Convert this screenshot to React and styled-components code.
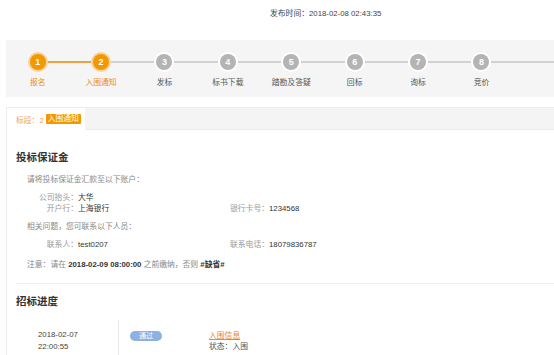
import React from "react";
import styled, { createGlobalStyle } from "styled-components";

const GlobalStyle = createGlobalStyle`
  html, body {
    margin: 0;
    padding: 0;
    background: #fff;
    overflow: hidden;
  }
  body {
    font-family: "Liberation Sans", "Noto Sans CJK SC", sans-serif;
    font-size: 7.8px;
    color: #333;
  }
`;

const Page = styled.div`
  width: 554px;
  height: 355px;
  padding-left: 6px;
  box-sizing: border-box;
`;

const Header = styled.div`
  height: 40px;
  padding: 9px 0 0 264px;
  box-sizing: border-box;
  line-height: 10px;
  color: #444;
`;

const StepPanel = styled.div`
  height: 57px;
  background: #f5f5f5;
  display: flex;
`;

const Step = styled.div`
  width: 63.4px;
  display: flex;
  flex-direction: column;
  align-items: center;
`;

const Track = styled.div`
  width: 100%;
  display: flex;
  align-items: center;
  height: 18px;
  margin-top: 13px;
`;

const Line = styled.div`
  flex: 1;
  height: 2px;
  background: ${(p) =>
    p.$hidden ? "transparent" : p.$active ? "#f0a040" : "#d2d2d2"};
`;

const Circle = styled.div`
  width: 16px;
  height: 16px;
  border-radius: 50%;
  margin: 0 2px;
  background: ${(p) => (p.$active ? "#f39800" : "#b4b4b4")};
  box-shadow: 0 0 0 2px
    ${(p) => (p.$active ? "rgba(245, 170, 60, 0.45)" : "#fff")};
  color: #fff;
  font-weight: bold;
  font-size: 9px;
  display: flex;
  align-items: center;
  justify-content: center;
`;

const StepLabel = styled.div`
  margin-top: 7px;
  line-height: 10px;
  color: ${(p) => (p.$active ? "#f08a10" : "#555")};
`;

const Tail = styled.div`
  flex: 1;
  height: 2px;
  margin-top: 21px;
  background: #d2d2d2;
`;

const Card = styled.div`
  margin-top: 10px;
  border-left: 1px solid #ececec;
`;

const TabBar = styled.div`
  height: 23px;
  background: #f4f4f4;
  border-top: 1px solid #ececec;
  border-bottom: 1px solid #ececec;
  box-sizing: border-box;
  display: flex;
`;

const Tab = styled.div`
  width: 78px;
  background: #fff;
  margin-bottom: -1px;
  padding-left: 9px;
  box-sizing: border-box;
  display: flex;
  align-items: center;
  gap: 2px;
  color: #f2a35c;
`;

const TabBadge = styled.span`
  background: #f39800;
  color: #fff;
  padding: 0 2px;
  line-height: 10px;
  border-radius: 1px;
`;

const Body = styled.div`
  padding-left: 9px;
`;

const Heading = styled.h2`
  margin: ${(p) => p.$top}px 0 0;
  font-size: 10.5px;
  line-height: 14px;
  font-weight: bold;
  color: #333;
`;

const Para = styled.div`
  margin-top: ${(p) => p.$top}px;
  padding-left: 11px;
  line-height: ${(p) => p.$lh || 10}px;
  color: #888;
  b {
    color: #333;
  }
`;

const InfoGrid = styled.div`
  margin-top: ${(p) => p.$top}px;
  display: grid;
  grid-template-columns: 214px 1fr;
  line-height: 11px;
`;

const Field = styled.div`
  display: flex;
  color: #333;
`;

const FieldLabel = styled.span`
  width: 62px;
  text-align: right;
  color: #999;
`;

const InlineLabel = styled.span`
  color: #999;
`;

const Divider = styled.hr`
  margin: 13px 0 0;
  border: 0;
  border-top: 1px solid #eeeeee;
`;

const Timeline = styled.div`
  margin-top: 12px;
  display: flex;
  height: 40px;
`;

const TimeCol = styled.div`
  width: 102px;
  padding: 9px 0 0 22px;
  box-sizing: border-box;
  line-height: 12px;
  color: #444;
`;

const EventCol = styled.div`
  flex: 1;
  border-left: 1px solid #e6e6e6;
  display: flex;
  align-items: flex-start;
  padding: 10px 0 0 11px;
`;

const Pill = styled.span`
  width: 32px;
  height: 10px;
  margin-top: 1px;
  border-radius: 5px;
  background: #8db1e0;
  color: #fff;
  font-size: 7px;
  line-height: 10px;
  text-align: center;
`;

const EventInfo = styled.div`
  margin-left: 47px;
  line-height: 11px;
  color: #555;
`;

const EventLink = styled.a`
  color: #f0861a;
  text-decoration: underline;
`;

const steps = ["报名", "入围通知", "发标", "标书下载", "踏勘及答疑", "回标", "询标", "竞价"];
const activeCount = 2;

export default function App() {
  return (
    <Page>
      <GlobalStyle />
      <Header>发布时间：2018-02-08 02:43:35</Header>

      <StepPanel>
        {steps.map((name, i) => (
          <Step key={name}>
            <Track>
              <Line $hidden={i === 0} $active={i < activeCount} />
              <Circle $active={i < activeCount}>{i + 1}</Circle>
              <Line $active={i + 1 < activeCount} />
            </Track>
            <StepLabel $active={i < activeCount}>{name}</StepLabel>
          </Step>
        ))}
        <Tail />
      </StepPanel>

      <Card>
        <TabBar>
          <Tab>
            标段：2 <TabBadge>入围通知</TabBadge>
          </Tab>
        </TabBar>

        <Body>
          <Heading $top={20}>投标保证金</Heading>
          <Para $top={11}>请将投标保证金汇款至以下账户：</Para>
          <InfoGrid $top={7}>
            <Field>
              <FieldLabel>公司抬头：</FieldLabel>大华
            </Field>
            <div />
            <Field>
              <FieldLabel>开户行：</FieldLabel>上海银行
            </Field>
            <Field>
              <InlineLabel>银行卡号：</InlineLabel>1234568
            </Field>
          </InfoGrid>
          <Para $top={8}>相关问题，您可联系以下人员：</Para>
          <InfoGrid $top={7}>
            <Field>
              <FieldLabel>联系人：</FieldLabel>test0207
            </Field>
            <Field>
              <InlineLabel>联系电话：</InlineLabel>18079836787
            </Field>
          </InfoGrid>
          <Para $top={10}>
            注意：请在 <b>2018-02-09 08:00:00</b> 之前缴纳，否则 <b>#缺省#</b>
          </Para>
          <Divider />

          <Heading $top={10}>招标进度</Heading>
          <Timeline>
            <TimeCol>
              2018-02-07
              <br />
              22:00:55
            </TimeCol>
            <EventCol>
              <Pill>通过</Pill>
              <EventInfo>
                <EventLink>入围信息</EventLink>
                <div>状态：入围</div>
              </EventInfo>
            </EventCol>
          </Timeline>
        </Body>
      </Card>
    </Page>
  );
}
